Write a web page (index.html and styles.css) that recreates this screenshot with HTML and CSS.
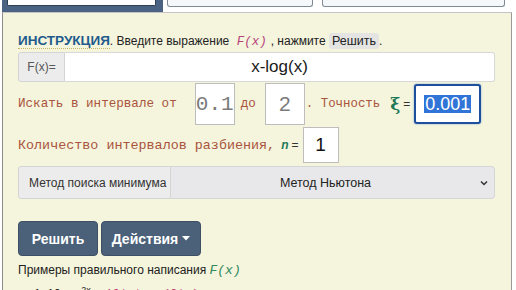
FILE: index.html
```html
<!DOCTYPE html>
<html lang="ru">
<head>
<meta charset="utf-8">
<link rel="stylesheet" href="styles.css">
</head>
<body>
<div class="tabs">
  <div class="tab-active"><div class="tab-face"></div></div>
  <div class="tab tab2"></div>
  <div class="tab tab3"></div>
</div>
<div class="panel">
  <div class="instr"><b class="instr-title">ИНСТРУКЦИЯ</b>. Введите выражение <span class="code-pink">F(x)</span>, нажмите <span class="kbd">Решить</span>.</div>

  <div class="group fx-group">
    <span class="addon fx-addon">F(x)=</span>
    <span class="fx-input">x-log(x)</span>
  </div>

  <div class="row row1">
    <span class="mono m1">Искать в интервале от</span>
    <span class="box box-a">0.1</span>
    <span class="mono m1">до</span>
    <span class="box box-b">2</span>
    <span class="mono m1 dot">.&nbsp;Точность</span>
    <span class="xi">ξ</span>
    <span class="eq">=</span>
    <span class="box-focus"><span class="sel">0.001</span></span>
  </div>

  <div class="row row2">
    <span class="mono m2">Количество интервалов разбиения,</span>
    <span class="nvar">n</span>
    <span class="eq">=</span>
    <span class="box box-n">1</span>
  </div>

  <div class="group sel-group">
    <span class="addon sel-addon">Метод поиска минимума</span>
    <span class="select">Метод Ньютона
      <svg class="chev" width="8" height="6" viewBox="0 0 8 6"><path d="M1 1.5 L4 4.5 L7 1.5" fill="none" stroke="#333" stroke-width="1.5"/></svg>
    </span>
  </div>

  <div class="btns">
    <span class="btn btn-solve">Решить</span>
    <span class="btn btn-act">Действия <svg width="8" height="5" viewBox="0 0 8 5"><path d="M0 0 H8 L4 4.5 Z" fill="#fff"/></svg></span>
  </div>

  <div class="examples">Примеры правильного написания <span class="code-green">F(x)</span></div>
  <div class="ex-item">1. 10·x·e<sup>2x</sup> = <span class="code-pink2">10*x*exp(2*x)</span></div>
</div>
</body>
</html>
```

FILE: styles.css
```css
html, body {
  margin: 0;
  padding: 0;
}
body {
  width: 516px;
  height: 290px;
  overflow: hidden;
  background: #ffffff;
  font-family: "Liberation Sans", Arial, sans-serif;
  color: #222;
}
.tabs {
  display: flex;
  align-items: flex-start;
  height: 12px;
  padding-left: 2px;
}
.tab-active {
  width: 161px;
  height: 12px;
  box-sizing: border-box;
  background: #4a6382;
  padding: 0 7px 0 5px;
}
.tab-face {
  height: 6px;
  box-sizing: border-box;
  background: #ffffff;
  border: 1px solid #2f4053;
  border-top: none;
  border-radius: 0 0 2px 2px;
}
.tab {
  height: 7px;
  box-sizing: border-box;
  border: 1px solid #7f8b97;
  border-top: none;
  border-radius: 0 0 3px 3px;
  background: #f4f8fb;
}
.tab2 {
  margin-left: 4px;
  width: 146px;
}
.tab3 {
  margin-left: 9px;
  width: 183px;
}
.panel {
  margin-left: 2px;
  width: 510px;
  height: 278px;
  box-sizing: border-box;
  border-left: 1px solid #8c8c8c;
  border-right: 1px solid #9a9a9a;
  border-top: 1px solid #c4c4c4;
  background: #f5f4dc;
  padding: 20px 15px 0 15px;
}
.instr {
  font-size: 12px;
  line-height: 16px;
  height: 16px;
  color: #222;
  white-space: nowrap;
}
.instr-title {
  font-size: 13.5px;
  color: #1f5b8c;
  border-bottom: 1px dotted #c8b466;
}
.code-pink {
  font-family: "Liberation Mono", "Courier New", monospace;
  font-style: italic;
  color: #b5457c;
  font-size: 12.5px;
  padding: 0 4px;
}
.kbd {
  background: #e4e4e2;
  border-radius: 3px;
  padding: 1px 3px;
  font-size: 12.5px;
  color: #222;
}
.group {
  display: flex;
  box-sizing: border-box;
}
.fx-group {
  margin-top: 3px;
  height: 30px;
  width: 477px;
}
.addon {
  display: flex;
  align-items: center;
  box-sizing: border-box;
  background: #ececec;
  border: 1px solid #d4d4d4;
  border-radius: 3px 0 0 3px;
  font-size: 12px;
  color: #555;
}
.fx-addon {
  width: 47px;
  justify-content: center;
}
.fx-input {
  flex: 1;
  display: flex;
  align-items: center;
  justify-content: center;
  background: #ffffff;
  border: 1px solid #d8d8d8;
  border-left: none;
  border-radius: 0 3px 3px 0;
  font-size: 17px;
  color: #1a1a1a;
}
.row {
  display: flex;
  align-items: center;
  white-space: nowrap;
}
.row1 {
  margin-top: 1px;
  height: 42px;
}
.row2 {
  margin-top: 2px;
  height: 36px;
}
.mono {
  font-family: "Liberation Mono", "Courier New", monospace;
  color: #a9553e;
}
.m1 {
  font-size: 12.6px;
}
.m2 {
  font-size: 13.4px;
}
.box {
  display: flex;
  align-items: center;
  justify-content: center;
  box-sizing: border-box;
  background: #ffffff;
  border: 1px solid #bdbdbd;
}
.box-a {
  width: 40px;
  height: 42px;
  margin: 0 6px 0 18px;
  font-family: "Liberation Mono", "Courier New", monospace;
  font-size: 21px;
  color: #7a7a7a;
}
.box-b {
  width: 40px;
  height: 42px;
  margin: 0 1px 0 9px;
  font-family: "Liberation Sans", Arial, sans-serif;
  font-size: 21px;
  color: #7a7a7a;
}
.dot {
  font-size: 12.4px;
}
.xi {
  margin-left: 10px;
  font-family: "DejaVu Serif", serif;
  font-size: 17px;
  font-weight: bold;
  color: #1d7a58;
}
.eq {
  margin-left: 3px;
  font-size: 12px;
  color: #333;
}
.box-focus {
  margin-left: 4px;
  width: 67px;
  height: 40px;
  box-sizing: border-box;
  display: flex;
  align-items: center;
  justify-content: center;
  background: #ffffff;
  border: 2px solid #1e4f9c;
  border-radius: 3px;
  box-shadow: 0 0 2px #7aa2dc;
}
.sel {
  background: #2f74d6;
  color: #ffffff;
  font-size: 18px;
  line-height: 18px;
  padding: 0 1px;
}
.nvar {
  margin-left: 6px;
  font-style: italic;
  font-weight: bold;
  font-size: 12px;
  color: #1d7a58;
}
.box-n {
  margin-left: 4px;
  width: 36px;
  height: 36px;
  font-size: 19px;
  color: #111;
}
.sel-group {
  margin-top: 3px;
  height: 33px;
  width: 477px;
}
.sel-addon {
  width: 153px;
  padding-left: 10px;
  font-size: 12px;
  color: #333;
}
.select {
  flex: 1;
  position: relative;
  display: flex;
  align-items: center;
  justify-content: center;
  box-sizing: border-box;
  background: #e8e8eb;
  border: 1px solid #d6d6d8;
  border-left: none;
  border-radius: 0 4px 4px 0;
  font-size: 12.5px;
  color: #222;
  padding-right: 14px;
}
.chev {
  position: absolute;
  right: 6px;
  top: 13px;
}
.btns {
  display: flex;
  gap: 3px;
  margin-top: 22px;
  height: 35px;
}
.btn {
  display: flex;
  align-items: center;
  justify-content: center;
  gap: 4px;
  background: #4b6179;
  color: #ffffff;
  font-weight: bold;
  font-size: 14px;
  border-radius: 4px;
  border: 1px solid #3d5066;
  box-sizing: border-box;
}
.btn-solve {
  width: 80px;
}
.btn-act {
  width: 100px;
}
.examples {
  margin-top: 7px;
  font-size: 12px;
  line-height: 14px;
  color: #222;
}
.code-green {
  font-family: "Liberation Mono", "Courier New", monospace;
  font-style: italic;
  font-size: 13px;
  color: #2f8a5c;
}
.ex-item {
  margin-top: 5px;
  padding-left: 16px;
  font-size: 12px;
  line-height: 14px;
  color: #222;
}
.ex-item sup {
  font-size: 9px;
}
.code-pink2 {
  font-family: "Liberation Mono", "Courier New", monospace;
  font-style: italic;
  font-size: 12px;
  color: #c4306a;
}
```
